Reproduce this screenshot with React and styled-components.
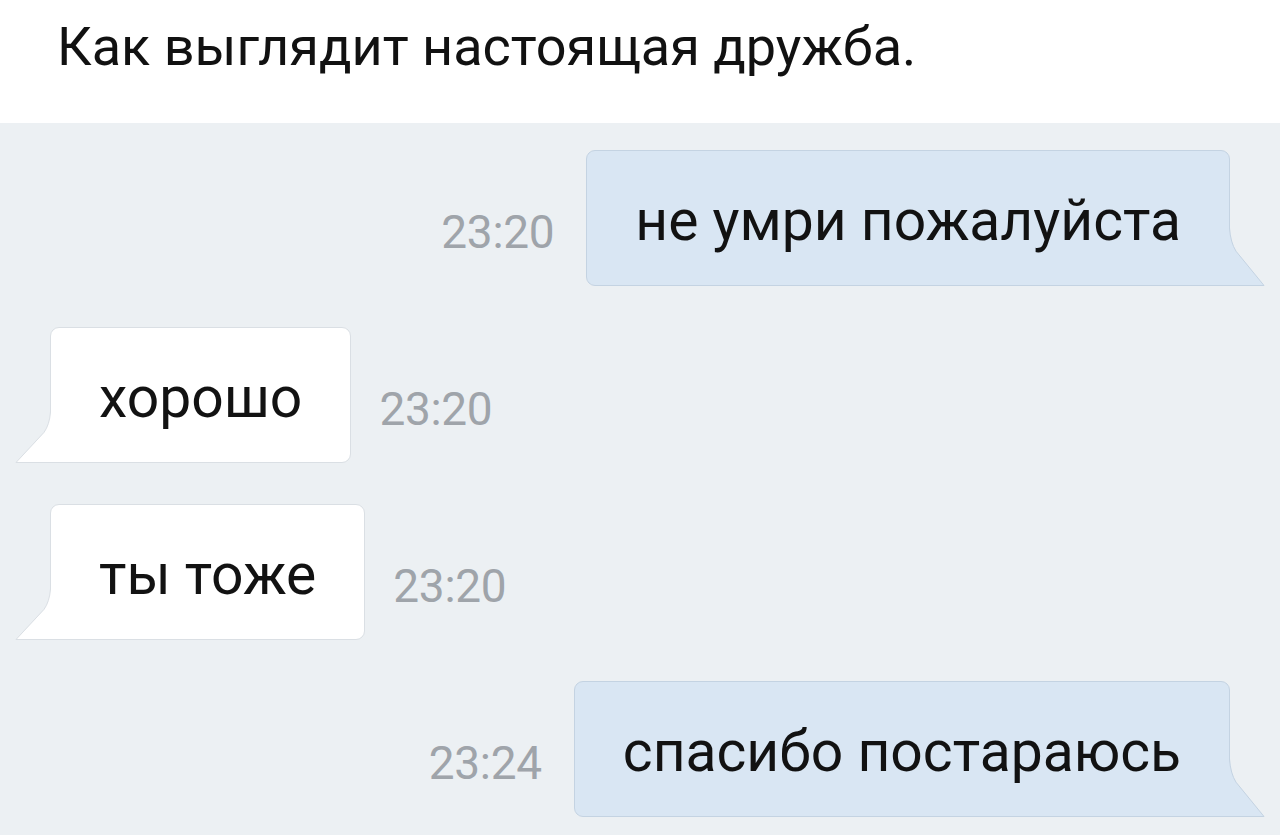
import React from "react";
import styled, { createGlobalStyle } from "styled-components";

const Global = createGlobalStyle`
  html, body { margin: 0; padding: 0; background: #ecf0f3; }
  body { font-family: Roboto, "Noto Sans", sans-serif; -webkit-font-smoothing: antialiased; }
  #root { width: 1280px; height: 835px; overflow: hidden; }
`;

const Page = styled.div`
  width: 1280px;
  height: 835px;
  display: flex;
  flex-direction: column;
  background: #ecf0f3;
`;

const Header = styled.header`
  height: 123px;
  box-sizing: border-box;
  background: #ffffff;
  padding: 20px 0 0 57px;
`;

const Title = styled.h1`
  margin: 0;
  font-family: Roboto, "Noto Sans", sans-serif;
  font-weight: 400;
  font-size: 54px;
  line-height: 1;
  color: #111111;
  letter-spacing: 0;
`;

const Chat = styled.main`
  flex: 1;
  display: flex;
  flex-direction: column;
  gap: 41px;
  padding: 27px 50px 0 50px;
`;

const Row = styled.div`
  display: flex;
  align-items: center;
  flex-direction: ${(p) => (p.$out ? "row" : "row-reverse")};
  justify-content: flex-end;
  gap: ${(p) => (p.$out ? "32px" : "28px")};
`;

const Time = styled.span`
  font-family: Roboto, "Noto Sans", sans-serif;
  font-size: 46px;
  line-height: 1;
  color: #9fa4aa;
  letter-spacing: -0.3px;
  margin-top: 28px;
`;

const Bubble = styled.div`
  position: relative;
  box-sizing: border-box;
  height: 136px;
  padding: 41px 48px 0 48px;
  background: ${(p) => (p.$out ? "#d9e6f3" : "#ffffff")};
  border: 1px solid ${(p) => (p.$out ? "#c4d3e2" : "#dadfe4")};
  border-radius: ${(p) => (p.$out ? "9px 9px 0 9px" : "9px 9px 9px 0")};
  font-family: Roboto, "Noto Sans", sans-serif;
  font-size: 57px;
  line-height: 1;
  color: #121212;
  white-space: nowrap;
`;

const TailSvg = styled.svg`
  position: absolute;
  bottom: -1px;
  ${(p) => (p.$out ? "left: 100%;" : "right: 100%; transform: scaleX(-1);")}
  overflow: visible;
`;

function Tail({ out, h }) {
  const bg = out ? "#d9e6f3" : "#ffffff";
  const bd = out ? "#c4d3e2" : "#dadfe4";
  const b = h - 0.5;
  const d = `M0.5 0 Q1.5 ${h * 0.25} 7 ${h * 0.4} L35 ${b} L0 ${b}`;
  return (
    <TailSvg $out={out} width="36" height={h} viewBox={`0 0 36 ${h}`}>
      <path d={`${d} L0 0 Z`} fill={bg} />
      <path d={d} fill="none" stroke={bd} strokeWidth="1" />
    </TailSvg>
  );
}

const messages = [
  { out: true, text: "не умри пожалуйста", time: "23:20" },
  { out: false, text: "хорошо", time: "23:20" },
  { out: false, text: "ты тоже", time: "23:20" },
  { out: true, text: "спасибо постараюсь", time: "23:24" },
];

export default function App() {
  return (
    <Page>
      <Global />
      <Header>
        <Title>Как выглядит настоящая дружба.</Title>
      </Header>
      <Chat>
        {messages.map((m, i) => (
          <Row key={i} $out={m.out}>
            <Time>{m.time}</Time>
            <Bubble $out={m.out}>
              {m.text}
              <Tail out={m.out} h={m.out ? 58 : 51} />
            </Bubble>
          </Row>
        ))}
      </Chat>
    </Page>
  );
}
